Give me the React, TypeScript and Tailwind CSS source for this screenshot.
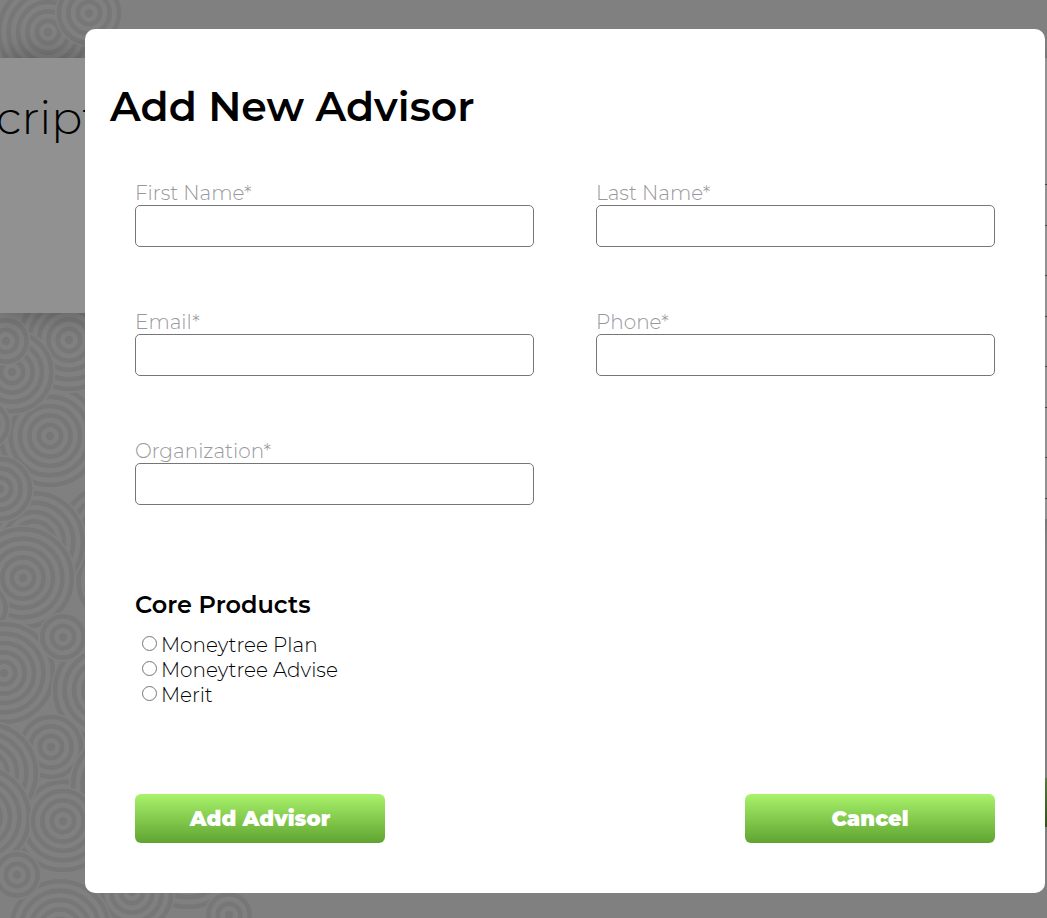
import React from "react";

type Ripple = [cx: number, cy: number, rings: number];

// Painted in order, so later ripples overlap the earlier ones.
const ripples: Ripple[] = [
  [48, 32, 5],
  [89, 13, 3],
  [104, 528, 4],
  [118, 582, 4],
  [50, 436, 5],
  [69, 340, 5],
  [12, 372, 4],
  [6, 341, 2],
  [-13, 425, 2],
  [34, 542, 5],
  [0, 489, 3],
  [23, 578, 5],
  [-15, 608, 2],
  [4, 673, 5],
  [104, 690, 5],
  [63, 637, 2],
  [63, 821, 5],
  [51, 747, 3],
  [122, 785, 5],
  [51, 747, 2],
  [-13, 773, 5],
  [-20, 817, 5],
  [63, 821, 3],
  [188, 858, 5],
  [132, 892, 4],
  [60, 930, 5],
  [17, 875, 2],
  [229, 915, 2],
];

function RipplePattern() {
  return (
    <svg className="absolute top-0 left-0" width="256" height="918" viewBox="0 0 256 918">
      {ripples.map(([cx, cy, rings], i) => (
        <g key={i} fill="none" stroke="#777777" strokeWidth="4.6">
          <circle cx={cx} cy={cy} r={rings * 9.4 + 6} fill="#808080" stroke="none" />
          <circle cx={cx} cy={cy} r="4.2" fill="#777777" stroke="none" />
          {Array.from({ length: rings }, (_, n) => (
            <circle key={n} cx={cx} cy={cy} r={(n + 1) * 9.4 + 1.8} />
          ))}
        </g>
      ))}
    </svg>
  );
}

function Backdrop() {
  return (
    <div className="absolute inset-0 overflow-hidden bg-[#808080]">
      <RipplePattern />
      <div className="relative flex items-start justify-between pt-[58px]">
        <div className="h-[255px] w-48 bg-[#919191] pt-7 shadow-[0_0_24px_rgba(0,0,0,0.28)]">
          <p className="-ml-1 text-[46px] leading-16 font-light">cript</p>
        </div>
        <div className="w-32">
          <div className="h-[461px] bg-[#919191] pt-[126px] shadow-[0_0_24px_rgba(0,0,0,0.28)]">
            <div className="h-px bg-[#444]" />
            {[0, 1, 2, 3].map((row) => (
              <React.Fragment key={row}>
                <div className="h-[41px] border-b border-[#444]" />
                {row < 3 && <div className="h-[50px] border-b border-[#444]" />}
              </React.Fragment>
            ))}
          </div>
          <div className="mt-[259px] h-[49px] bg-linear-to-b from-[#54793a] to-[#315218]" />
        </div>
      </div>
    </div>
  );
}

function Field({ id, label, type = "text" }: { id: string; label: string; type?: string }) {
  return (
    <div>
      <label htmlFor={id} className="block text-xl leading-[23px] font-light text-[#98989c]">
        {label}
      </label>
      <input
        id={id}
        type={type}
        className="block h-[42px] w-full rounded-[5px] border border-[#767676] bg-white px-2 text-xl"
      />
    </div>
  );
}

function ActionButton({ children }: { children: React.ReactNode }) {
  return (
    <button
      type="button"
      className="h-[49px] w-[250px] rounded-md bg-linear-to-b from-[#a9f36b] to-[#60a430] text-[21px] font-black text-white"
    >
      {children}
    </button>
  );
}

export default function App() {
  return (
    <div className="relative flex min-h-screen flex-col overflow-hidden font-['Montserrat','Inter',sans-serif] text-black">
      <Backdrop />
      <div
        role="dialog"
        aria-labelledby="title"
        className="relative mt-[29px] mr-0.5 mb-[25px] ml-[85px] rounded-[10px] bg-white px-[25px] pt-[52px] pb-[50px]"
      >
        <h1 id="title" className="text-[41px] leading-[50px] font-semibold">
          Add New Advisor
        </h1>
        <form className="px-[25px] pt-[51px]">
          <div className="grid grid-cols-2 gap-x-[62px] gap-y-[64px]">
            <Field id="first" label="First Name*" />
            <Field id="last" label="Last Name*" />
            <Field id="email" label="Email*" type="email" />
            <Field id="phone" label="Phone*" type="tel" />
            <Field id="organization" label="Organization*" />
          </div>
          <fieldset className="mt-[86px]">
            <legend className="text-2xl leading-[28px] font-semibold">Core Products</legend>
            <div className="mt-[13px] pl-[7px]">
              {["Moneytree Plan", "Moneytree Advise", "Merit"].map((name) => (
                <label key={name} className="flex h-[25px] items-center gap-1 text-xl font-light">
                  <input
                    type="radio"
                    name="product"
                    className="mb-0.5 size-[15px] appearance-none rounded-full border border-[#767676] bg-white checked:border-4"
                  />
                  {name}
                </label>
              ))}
            </div>
          </fieldset>
          <div className="mt-[87px] flex justify-between">
            <ActionButton>Add Advisor</ActionButton>
            <ActionButton>Cancel</ActionButton>
          </div>
        </form>
      </div>
    </div>
  );
}
